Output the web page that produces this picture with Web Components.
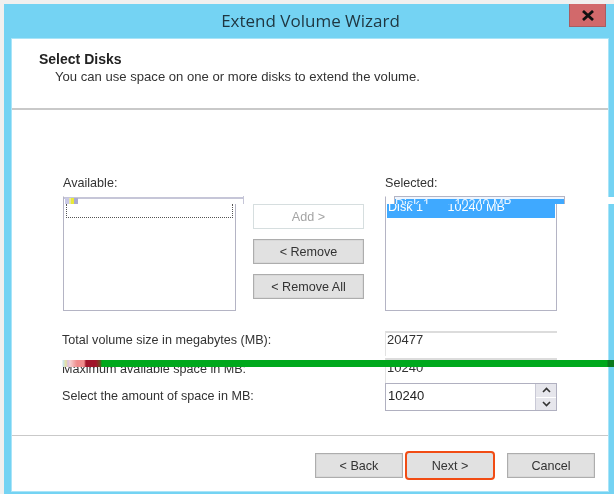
<!DOCTYPE html>
<html><head><meta charset="utf-8"><style>
html,body{margin:0;padding:0;background:#f1f0ef}
body{font:12.6px/16px "Liberation Sans",Arial,sans-serif;color:#333}
</style></head><body>
<wiz-window heading="Extend Volume Wizard">
  <wiz-header heading="Select Disks" text="You can use space on one or more disks to extend the volume."></wiz-header>
  <wiz-picker></wiz-picker>
  <wiz-fields></wiz-fields>
  <wiz-footer></wiz-footer>
</wiz-window>
<script>
function def(name, html){
  customElements.define(name, class extends HTMLElement{
    connectedCallback(){
      if(this.shadowRoot) return;
      const r=this.attachShadow({mode:'open'});
      r.innerHTML=typeof html==='function'?html(this):html;
    }
  });
}
def('wiz-window', h=>`<style>
:host{display:block;width:614px;height:494px;box-sizing:border-box;padding:4px 0 0 4px;position:relative;overflow:hidden;filter:blur(.4px)}
.frame{height:490px;background:#74d3f3;display:flex;flex-direction:column;position:relative}
.bar{height:35px;flex:none;display:flex;justify-content:center;align-items:center;position:relative;
 font:17px/20px "Open Sans","Liberation Sans",sans-serif;color:#1f3640;padding:0 0 1px 3px;box-sizing:border-box}
.close{position:absolute;top:0;left:565px;width:37px;height:23px;box-sizing:border-box;background:#d2696b;border:1px solid #a85d62;border-top:0;display:flex;align-items:center;justify-content:center}
.client{flex:1;min-height:0;margin:0 6px 3px 8px;background:#fff;box-shadow:0 0 0 1px #a9e4f8;display:flex;flex-direction:column}
.tear{position:absolute;left:604px;top:193px;width:6px;height:7px;background:#fff}
</style>
<div class="frame">
 <div class="bar">${h.getAttribute('heading')}
  <div class="close"><svg width="14" height="11" viewBox="0 0 14 11"><path d="M2 1l10 9M12 1L2 10" stroke="#111" stroke-width="2.8" fill="none"/></svg></div>
 </div>
 <div class="client"><slot></slot></div>
 <div class="tear"></div>
</div>`);
def('wiz-header', h=>`<style>
:host{display:block;height:71px;flex:none;box-sizing:border-box;border-bottom:2px solid #c9c9c9;padding:12px 0 0 27px}
b{display:block;font:bold 14px/16px "Liberation Sans",sans-serif;color:#222}
p{margin:2px 0 0 16px;font:13.1px/16px "Liberation Sans",sans-serif;color:#333}
</style><b>${h.getAttribute('heading')}</b><p>${h.getAttribute('text')}</p>`);
def('wiz-list', h=>`<style>
:host{display:block;position:relative;height:115px;box-sizing:border-box;border:1px solid #b4b4c4;border-top-color:transparent;background:#fff}
.row{position:absolute;left:1px;right:1px;top:7px;height:14px;box-sizing:border-box;overflow:hidden;font:12.6px/14px "Liberation Sans",sans-serif;white-space:pre}
.row span{position:relative;top:-4px;left:1px}
.sel{background:#3fa9ff;color:#fff}
.focus{left:2px;right:2px;border:1px dotted #555;border-top:0}
.top{position:absolute;left:8px;top:-1px;width:171px;height:8px;box-sizing:border-box;background:#fff;border-top:2px solid #b9b9cc;overflow:hidden;font:12.6px/14px "Liberation Sans",sans-serif;white-space:pre}
.top.on{border:1px solid #b4b4c4;border-bottom:0;background:#3fa9ff;color:#e8f4ff;box-shadow:inset 0 2px 0 #eef6ff}
.top.on span{position:relative;top:0;left:0}
.top.off{left:0;width:180px;border-top:0;background:linear-gradient(#fff 1px,#c6c6d8 1px,#c6c6d8 3px,#fff 3px);border-right:1px solid #c6c6d8}
.noise{position:absolute;left:1px;top:1px;width:13px;height:6px;background:linear-gradient(90deg,#c9c9e6 0 30%,#e8e8a0 30% 50%,#e9e93a 50% 70%,#a9a9d0 70% 100%)}
</style>
${h.hasAttribute('value')?`<div class="row sel"><span>${h.getAttribute('value')}</span></div><div class="top on"><span>${h.getAttribute('value')}</span></div>`:`<div class="row focus"></div><div class="top off"></div><div class="noise"></div>`}`);
def('wiz-btn', h=>`<style>
:host{display:flex;align-items:center;justify-content:center;box-sizing:border-box;height:25px;background:#e1e1e1;border:1px solid #adadad;box-shadow:inset 0 0 0 .5px #d0d0d0;font:12.6px/16px "Liberation Sans",sans-serif;color:#333}
:host([disabled]){background:#fff;border-color:#d6dedf;color:#a4a4a4;box-shadow:none}
:host([primary]){height:29px;border:2.5px solid #f14c14;border-radius:4px;box-shadow:none}
</style><slot></slot>`);
def('wiz-picker', `<style>
:host{display:grid;flex:none;grid-template-columns:173px 111px 172px;column-gap:17px;padding:65px 0 0 51px;grid-template-rows:16px 115px;row-gap:5px}
label{font:12.6px/16px "Liberation Sans",sans-serif;color:#333}
.av{grid-column:1;grid-row:1}
.sel{grid-column:3;grid-row:1;margin-left:4px}
.l{grid-column:1;grid-row:2}
.mid{display:flex;flex-direction:column;gap:10px;padding-top:8px;grid-row:2;grid-column:2}
.r{grid-row:2;grid-column:3;margin-left:4px;margin-right:-4px}
</style>
<label class="av">Available:</label><label class="sel">Selected:</label>
<wiz-list class="l"></wiz-list>
<div class="mid"><wiz-btn disabled>Add &gt;</wiz-btn><wiz-btn>&lt; Remove</wiz-btn><wiz-btn>&lt; Remove All</wiz-btn></div>
<wiz-list class="r" value="Disk 1       10240 MB"></wiz-list>`);
def('wiz-fields', `<style>
:host{display:block;flex:none;padding:14px 0 0 50px}
.row{display:grid;grid-template-columns:323px 172px;align-items:center;font:12.6px/16px "Liberation Sans",sans-serif;color:#333}
.row>span{position:relative;top:-1px}
.row>span.m{top:0}
.ro{align-self:start;height:25px;box-sizing:border-box;border-top:2px solid #dcdcdc;border-left:1px solid #e2e2e2;padding-left:1px;font:13px/14px "Liberation Sans",sans-serif}
.spin{align-self:start;margin-top:1px;height:28px;box-sizing:border-box;border:1px solid #b0b0c0;display:flex;justify-content:space-between;align-items:stretch;font:13px/23px "Liberation Sans",sans-serif;padding-left:2px;color:#222}
.btns{width:20px;display:flex;flex-direction:column;gap:1px;background:#fff;border-left:1px solid #c9c9d6}
.btns i{flex:1;background:#e6e6ec;display:flex;align-items:center;justify-content:center}
.line{position:absolute;left:0;width:552px;top:5.5px;height:7px;background:linear-gradient(90deg,#fff 0,#c9e6f0 1px,#e5e0a0 4px,#d9c0e0 6px,#f5d0d0 8px,#ef8c8c 15px,#ef8c8c 22px,#a0152a 24px,#a0152a 34px,#6a4a20 38px,#00a81c 40px,#00a81c 545px,#0a7a1e 546px)}
.stage{position:relative}
</style>
<div class="row" style="height:29px"><span>Total volume size in megabytes (MB):</span><div class="ro" style="margin-top:6px">20477</div></div>
<div class="stage">
<div class="row" style="height:28px"><span class="m">Maximum available space in MB:</span><div class="ro" style="margin-top:4px;padding-top:1px">10240</div></div>
<div class="line"></div>
</div>
<div class="row" style="height:27px"><span>Select the amount of space in MB:</span><div class="spin">10240<div class="btns"><i><svg width="9" height="6" viewBox="0 0 9 6"><path d="M1 5l3.5-3.5L8 5" stroke="#333" stroke-width="1.6" fill="none"/></svg></i><i><svg width="9" height="6" viewBox="0 0 9 6"><path d="M1 1l3.5 3.5L8 1" stroke="#333" stroke-width="1.6" fill="none"/></svg></i></div></div></div>`);
def('wiz-footer', `<style>
:host{display:flex;flex:none;margin-top:auto;height:56px;box-sizing:border-box;border-top:1px solid #c9c9c9;align-items:center;justify-content:flex-end;padding:4px 13px 0 0}
wiz-btn{width:88px}
.n{width:90px;margin:0 12px 0 2px}
</style><wiz-btn>&lt; Back</wiz-btn><wiz-btn class="n" primary>Next &gt;</wiz-btn><wiz-btn>Cancel</wiz-btn>`);
</script>
</body></html>
